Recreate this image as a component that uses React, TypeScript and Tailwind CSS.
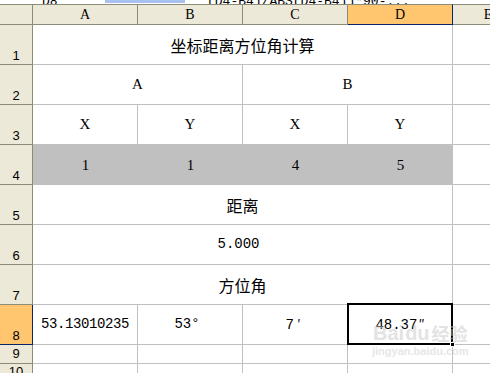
import React from "react";

const mono = "font-['Liberation_Mono','Noto_Sans_CJK_SC',monospace]";
const cjk = "font-['Noto_Sans_CJK_SC',sans-serif]";
const serif = "font-['Liberation_Serif','Noto_Sans_CJK_SC',serif]";

const hdr =
  "bg-[#ece9d8] border-t border-b border-r border-t-[#8d8b7a] border-b-[#8d8b7a] border-r-[#8d8b7a] flex items-center justify-center text-[14px] text-black " +
  serif;
const rowHdr =
  "bg-[#ece9d8] border-r border-b border-[#8d8b7a] flex items-end justify-center pb-[1px] text-[13px] leading-[14px] text-black font-['Liberation_Sans',sans-serif]";
const cell = "border-r border-b border-[#c0c0c0] flex items-center justify-center text-black";
const eCell = "border-b border-[#c0c0c0]";
const grayCell = "bg-[#c0c0c0] border-b border-[#c0c0c0] flex items-center justify-center pt-[2px] text-[15px] text-black " + serif;

function RowHead({ n, active }: { n: string; active?: boolean }) {
  return (
    <div
      className={
        active
          ? "bg-[#ffc56f] border-r border-b border-r-[#0a246a] border-b-[#0a246a] flex items-end justify-center pb-[1px] text-[13px] leading-[14px] text-black font-['Liberation_Sans',sans-serif]"
          : rowHdr
      }
    >
      {n}
    </div>
  );
}

export default function App() {
  return (
    <div className="w-[490px] h-[373px] overflow-hidden bg-white relative">
      {/* formula bar remnant */}
      <div className="h-[4px] w-[560px] flex relative overflow-hidden bg-white">
        <div className="w-[105px] relative">
          <span className={"absolute left-[42px] bottom-[-4px] text-[13px] leading-[13px] " + mono}>D8</span>
        </div>
        <div className="w-[80px] h-[3px] bg-[#a9c1ee]" />
        <div className="flex-1 relative">
          <span className={"absolute left-[22px] bottom-[-4px] text-[13px] leading-[13px] whitespace-nowrap " + mono}>
            (D4-B4)/ABS(D4-B4))*90-...
          </span>
        </div>
      </div>

      <div className="grid w-[523px] grid-cols-[33px_105px_105px_105px_105px_70px] grid-rows-[21px_repeat(8,40px)_19px_40px]">
        {/* header row */}
        <div className={hdr} />
        <div className={hdr}>A</div>
        <div className={hdr}>B</div>
        <div className={hdr}>C</div>
        <div
          className={
            "bg-[#ffc56f] border-t border-b border-r border-t-[#8d8b7a] border-b-[#0a246a] border-r-[#0a246a] flex items-center justify-center text-[14px] text-black " +
            serif
          }
        >
          D
        </div>
        <div className={hdr + " border-r-0"}>E</div>

        {/* row 1 */}
        <RowHead n="1" />
        <div className={cell + " col-span-4 text-[16px] " + cjk}>坐标距离方位角计算</div>
        <div className={eCell} />

        {/* row 2 */}
        <RowHead n="2" />
        <div className={cell + " col-span-2 text-[15px] " + serif}>A</div>
        <div className={cell + " col-span-2 text-[15px] " + serif}>B</div>
        <div className={eCell} />

        {/* row 3 */}
        <RowHead n="3" />
        <div className={cell + " text-[15px] " + serif}>X</div>
        <div className={cell + " text-[15px] " + serif}>Y</div>
        <div className={cell + " text-[15px] " + serif}>X</div>
        <div className={cell + " text-[15px] " + serif}>Y</div>
        <div className={eCell} />

        {/* row 4 */}
        <RowHead n="4" />
        <div className={grayCell}>1</div>
        <div className={grayCell}>1</div>
        <div className={grayCell}>4</div>
        <div className={grayCell}>5</div>
        <div className={eCell} />

        {/* row 5 */}
        <RowHead n="5" />
        <div className={cell + " col-span-4 text-[16px] " + cjk}>距离</div>
        <div className={eCell} />

        {/* row 6 */}
        <RowHead n="6" />
        <div className={cell + " col-span-4 text-[14px] " + mono}>
          <span className="mr-[8px]">5.000</span>
        </div>
        <div className={eCell} />

        {/* row 7 */}
        <RowHead n="7" />
        <div className={cell + " col-span-4 text-[16px] " + cjk}>方位角</div>
        <div className={eCell} />

        {/* row 8 */}
        <RowHead n="8" active />
        <div className={cell + " text-[14px] tracking-[-0.4px] " + mono}>53.13010235</div>
        <div className={cell + " text-[14px] " + mono}>
          <span className="mr-[6px]">53°</span>
        </div>
        <div className={cell + " text-[14px] " + mono}>
          <span className="mr-[4px]">
            7<span className={"ml-[3px] text-[13px] " + cjk}>′</span>
          </span>
        </div>
        <div className={cell + " relative text-[14px] " + mono}>
          <span>
            48.37<span className={"ml-[1px] text-[13px] " + cjk}>″</span>
          </span>
          <div className="absolute left-[-1px] top-[-2px] right-[-1px] bottom-[-1px] border-2 border-black pointer-events-none" />
          <div className="absolute right-[-3px] bottom-[-3px] w-[5px] h-[5px] bg-black border border-white" />
        </div>
        <div className={eCell} />

        {/* row 9 */}
        <div className="bg-[#ece9d8] border-r border-b border-[#8d8b7a] flex items-center justify-center text-[13px] leading-[14px] text-black font-['Liberation_Sans',sans-serif]">
          9
        </div>
        <div className={cell} />
        <div className={cell} />
        <div className={cell} />
        <div className={cell} />
        <div className={eCell} />

        {/* row 10 */}
        <div className="bg-[#ece9d8] border-r border-b border-[#8d8b7a] flex items-start justify-center pt-[1px] text-[13px] leading-[14px] text-black font-['Liberation_Sans',sans-serif]">
          10
        </div>
        <div className={cell} />
        <div className={cell} />
        <div className={cell} />
        <div className={cell} />
        <div className={eCell} />
      </div>

      {/* watermark */}
      <div className="absolute left-[372px] top-[322px] pointer-events-none flex flex-col items-center opacity-50">
        <div className="flex items-center text-[#c8c8c8] font-bold text-[20px] leading-[22px] font-['Liberation_Sans',sans-serif]">
          <span>Bai</span>
          <span className="ml-[1px]">du</span>
          <span className={"ml-[2px] text-[18px] " + cjk}>经验</span>
        </div>
        <div className="text-[#cfcfcf] font-bold text-[11px] leading-[13px] mt-[1px] font-['Liberation_Sans',sans-serif]">
          jingyan.baidu.com
        </div>
      </div>
    </div>
  );
}
